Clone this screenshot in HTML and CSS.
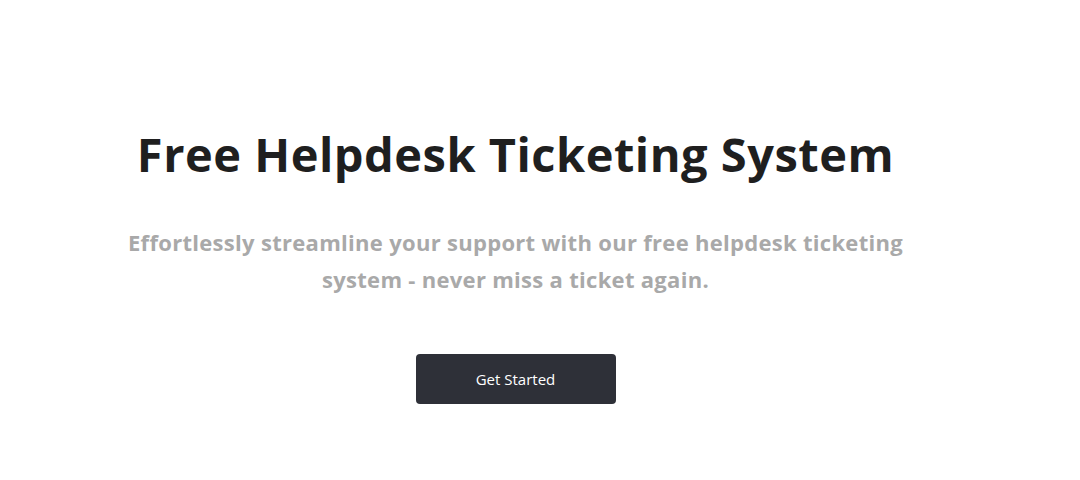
FILE: index.html
```html
<!DOCTYPE html>
<html lang="en">
<head>
<meta charset="utf-8">
<title>Free Helpdesk Ticketing System</title>
<link rel="stylesheet" href="styles.css">
</head>
<body>
<main class="hero">
  <h1 class="hero-title">Free Helpdesk Ticketing System</h1>
  <p class="hero-sub">Effortlessly streamline your support with our free helpdesk ticketing system - never miss a ticket again.</p>
  <a class="hero-btn" href="#">Get Started</a>
</main>
</body>
</html>
```
FILE: styles.css
```css
html, body {
  margin: 0;
  padding: 0;
  background: #ffffff;
}
body {
  font-family: "Open Sans", "Noto Sans", sans-serif;
  font-variant-ligatures: none;
}
.hero {
  width: 1031px;
  display: flex;
  flex-direction: column;
  align-items: center;
  text-align: center;
  padding-top: 118px;
}
.hero-title {
  margin: 0;
  font-size: 47px;
  line-height: 72px;
  font-weight: 700;
  letter-spacing: 0.5px;
  color: #1f1f1f;
}
.hero-sub {
  margin: 34px 0 0;
  max-width: 810px;
  font-size: 22px;
  line-height: 37px;
  font-weight: 700;
  letter-spacing: 0.3px;
  color: #a9a9a9;
}
.hero-btn {
  margin-top: 56px;
  width: 200px;
  height: 50px;
  display: flex;
  align-items: center;
  justify-content: center;
  background: #2e3038;
  border-radius: 4px;
  color: #ffffff;
  font-size: 15px;
  font-weight: 500;
  text-decoration: none;
}
```
